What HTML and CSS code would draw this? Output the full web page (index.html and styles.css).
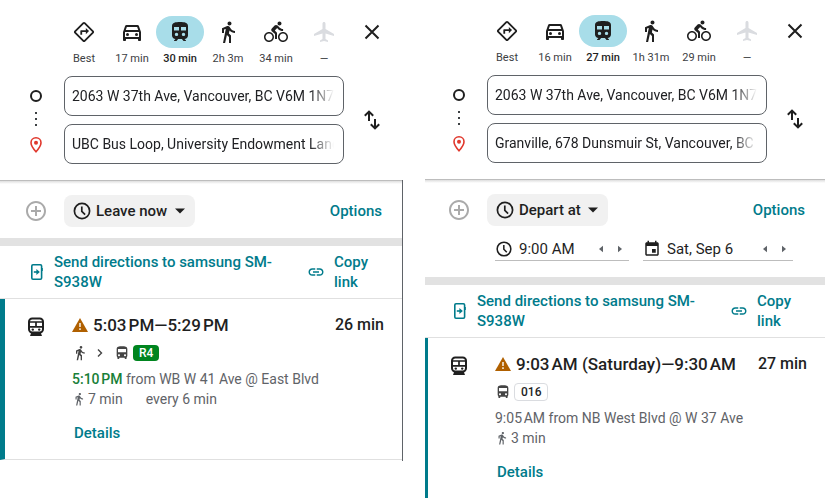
FILE: index.html
```html
<!DOCTYPE html>
<html lang="en">
<head>
<meta charset="utf-8">
<title>Transit directions</title>
<link rel="stylesheet" href="styles.css">
</head>
<body>
<svg class="sprite" aria-hidden="true">
  <symbol id="i-best" viewBox="0 0 24 24"><path d="M22.43 10.59l-9.01-9.01c-.75-.75-2.07-.76-2.83 0l-9 9c-.78.78-.78 2.04 0 2.82l9 9c.39.39.9.58 1.41.58.51 0 1.02-.19 1.41-.58l8.99-8.99c.79-.76.8-2.02.03-2.82zm-10.42 10.4l-9-9 9-9 9 9-9 9zM8 11v4h2v-3h4v2.5l3.5-3.5L14 7.5V10H9c-.55 0-1 .45-1 1z"/></symbol>
  <symbol id="i-car" viewBox="0 0 24 24"><path d="M18.92 6.01C18.72 5.42 18.16 5 17.5 5h-11c-.66 0-1.21.42-1.42 1.01L3 12v8c0 .55.45 1 1 1h1c.55 0 1-.45 1-1v-1h12v1c0 .55.45 1 1 1h1c.55 0 1-.45 1-1v-8l-2.08-5.99zM6.85 7h10.29l1.08 3.11H5.77L6.85 7zM19 17H5v-5h14v5z"/><circle cx="7.5" cy="14.5" r="1.5"/><circle cx="16.5" cy="14.5" r="1.5"/></symbol>
  <symbol id="i-train" viewBox="0 0 24 24"><path fill-rule="evenodd" d="M12 2c-4.400 0-8 .5-8 4v9.500C4 17.400 5.600 19 7.500 19L6 20.500v.5h2.500l1.600-2h3.800l1.600 2H18v-.5L16.500 19c1.900 0 3.500-1.600 3.500-3.500V6c0-3.500-3.600-4-8-4zM6 7h5v3.500H6zm7 0h5v3.500h-5zM8.500 12.700a1.700 1.700 0 1 1 0 3.400 1.700 1.700 0 0 1 0-3.400zm7 0a1.700 1.700 0 1 1 0 3.400 1.700 1.700 0 0 1 0-3.400z"/></symbol>
  <symbol id="i-walk" viewBox="0 0 24 24"><path d="M13.500 5.500c1.100 0 2-.9 2-2s-.9-2-2-2-2 .9-2 2 .9 2 2 2zM9.800 8.900L7 23h2.100l1.800-8 2.100 2v6h2v-7.500l-2.100-2 .6-3C14.800 12 16.800 13 19 13v-2c-1.900 0-3.500-1-4.300-2.400l-1-1.600c-.4-.6-1-1-1.700-1-.3 0-.5.1-.8.1L6 8.300V13h2V9.600l1.800-.7"/></symbol>
  <symbol id="i-bike" viewBox="0 0 24 24"><path d="M15.500 5.500c1.100 0 2-.9 2-2s-.9-2-2-2-2 .9-2 2 .9 2 2 2zM5 12c-2.800 0-5 2.200-5 5s2.200 5 5 5 5-2.200 5-5-2.200-5-5-5zm0 8.500c-1.900 0-3.500-1.600-3.500-3.500s1.600-3.500 3.500-3.500 3.500 1.600 3.500 3.500-1.600 3.500-3.500 3.500zm5.800-10l2.400-2.400.8.8c1.300 1.300 3 2.100 5.100 2.100V9c-1.500 0-2.700-.6-3.600-1.500l-1.900-1.900c-.5-.4-1-.6-1.600-.6s-1.100.2-1.400.6L7.800 8.400c-.4.4-.6.9-.6 1.400 0 .6.2 1.100.6 1.400L11 14v5h2v-6.200l-2.200-2.300zM19 12c-2.800 0-5 2.200-5 5s2.200 5 5 5 5-2.200 5-5-2.200-5-5-5zm0 8.500c-1.900 0-3.500-1.600-3.500-3.500s1.600-3.500 3.500-3.500 3.500 1.600 3.500 3.500-1.600 3.500-3.500 3.500z"/></symbol>
  <symbol id="i-plane" viewBox="0 0 24 24"><path d="M22 16v-2l-8.500-5V3.500c0-.83-.67-1.500-1.500-1.500s-1.500.67-1.500 1.500V9L2 14v2l8.500-2.500V19L8 20.500V22l4-1 4 1v-1.500L13.500 19v-5.500L22 16z"/></symbol>
  <symbol id="i-close" viewBox="0 0 24 24"><path d="M5.500 5.500l13 13m0-13l-13 13" fill="none" stroke="currentColor" stroke-width="2"/></symbol>
  <symbol id="i-swap" viewBox="0 0 24 24"><path d="M9 13V4M4.800 7.800L9 3.600l4.200 4.200M15 11v9M10.800 16.200l4.200 4.200 4.200-4.200" fill="none" stroke="currentColor" stroke-width="2"/></symbol>
  <symbol id="i-pin" viewBox="0 0 16 18"><path d="M8 1.800c-3 0-5 2.200-5 4.900C3 10 8 15.800 8 15.800S13 10 13 6.700c0-2.700-2-4.900-5-4.900z" fill="none" stroke="currentColor" stroke-width="1.600"/><circle cx="8" cy="6.800" r="2"/></symbol>
  <symbol id="i-add" viewBox="0 0 24 24"><path d="M13 7h-2v4H7v2h4v4h2v-4h4v-2h-4V7zm-1-5C6.490 2 2 6.490 2 12s4.490 10 10 10 10-4.490 10-10S17.510 2 12 2zm0 18c-4.410 0-8-3.590-8-8s3.590-8 8-8 8 3.590 8 8-3.590 8-8 8z"/></symbol>
  <symbol id="i-clock" viewBox="0 0 20 20"><circle cx="10" cy="10" r="7.600" fill="none" stroke="currentColor" stroke-width="1.700"/><path d="M9.800 5.500v4.800l3.300 3.400" fill="none" stroke="currentColor" stroke-width="1.700"/></symbol>
  <symbol id="i-event" viewBox="0 0 24 24"><path d="M17 12h-5v5h5v-5zM16 1v2H8V1H6v2H5c-1.110 0-1.990.9-1.990 2L3 19c0 1.100.89 2 2 2h14c1.100 0 2-.9 2-2V5c0-1.100-.9-2-2-2h-1V1h-2zm3 18H5V8h14v11z"/></symbol>
  <symbol id="i-down" viewBox="0 0 10 6"><path d="M0 .5h10L5 5.500z"/></symbol>
  <symbol id="i-prev" viewBox="0 0 4 8"><path d="M4 .8v6.400L0 4z"/></symbol>
  <symbol id="i-next" viewBox="0 0 4 8"><path d="M0 .8v6.400L4 4z"/></symbol>
  <symbol id="i-send" viewBox="0 0 12 16"><rect x=".8" y=".8" width="9.800" height="14.400" rx="1.200" fill="none" stroke="currentColor" stroke-width="1.600"/><path d="M10.600 4h1.200v3h-1.200z"/><path d="M2.800 8h3.500" fill="none" stroke="currentColor" stroke-width="1.600"/><path d="M5.400 5L8.800 8l-3.400 3z"/></symbol>
  <symbol id="i-link" viewBox="0 0 24 24"><path d="M3.900 12c0-1.710 1.390-3.100 3.100-3.100h4V7H7c-2.760 0-5 2.240-5 5s2.240 5 5 5h4v-1.900H7c-1.710 0-3.100-1.390-3.100-3.100zM8 13h8v-2H8v2zm9-6h-4v1.900h4c1.710 0 3.100 1.390 3.100 3.100s-1.390 3.100-3.100 3.100h-4V17h4c2.760 0 5-2.240 5-5s-2.240-5-5-5z"/></symbol>
  <symbol id="i-transit" viewBox="0 0 16 20"><rect x="1" y="1.500" width="14" height="14" rx="3.200" fill="none" stroke="currentColor" stroke-width="2"/><path d="M1 5h14M1 9.800h14M8 5v4.800" fill="none" stroke="currentColor" stroke-width="1.700"/><circle cx="4.800" cy="12.600" r="1.200"/><circle cx="11.200" cy="12.600" r="1.200"/><path d="M3.500 15h9l1.500 4H2z"/></symbol>
  <symbol id="i-warn" viewBox="0 0 16 14"><path d="M8 0l8 14H0z"/><path d="M8 5v4M8 10.300v1.700" stroke="#fff" stroke-width="1.400"/></symbol>
  <symbol id="i-bus" viewBox="0 0 24 24"><path d="M4 16c0 .88.39 1.670 1 2.220V20c0 .55.45 1 1 1h1c.55 0 1-.45 1-1v-1h8v1c0 .55.45 1 1 1h1c.55 0 1-.45 1-1v-1.780c.61-.55 1-1.340 1-2.220V6c0-3.500-3.580-4-8-4s-8 .5-8 4v10zm3.500 1c-.83 0-1.500-.67-1.500-1.500S6.670 14 7.500 14s1.500.67 1.500 1.500S8.330 17 7.500 17zm9 0c-.83 0-1.500-.67-1.500-1.500s.67-1.500 1.500-1.500 1.500.67 1.500 1.500-.67 1.500-1.500 1.500zm1.500-6H6V6h12v5z"/></symbol>
  <symbol id="i-chev" viewBox="0 0 8 10"><path d="M2 1.500L5.500 5 2 8.500" fill="none" stroke="currentColor" stroke-width="1.400"/></symbol>
</svg>

<main class="screens">
  <section class="panel panel-now">
    <header class="search">
      <div class="modes">
        <button class="mode"><span class="pill"><svg class="ic22"><use href="#i-best"/></svg></span>Best</button>
        <button class="mode"><span class="pill"><svg class="ic24"><use href="#i-car"/></svg></span>17 min</button>
        <button class="mode active"><span class="pill"><svg class="ic24"><use href="#i-train"/></svg></span>30 min</button>
        <button class="mode"><span class="pill"><svg class="ic24"><use href="#i-walk"/></svg></span>2h 3m</button>
        <button class="mode"><span class="pill"><svg class="ic24"><use href="#i-bike"/></svg></span>34 min</button>
        <button class="mode off"><span class="pill"><svg class="ic24"><use href="#i-plane"/></svg></span>—</button>
        <button class="close" aria-label="Close directions"><svg class="ic24"><use href="#i-close"/></svg></button>
      </div>
      <div class="route">
        <div class="rail"><span class="origin"></span><span class="dots"><i></i><i></i><i></i></span><svg class="pin"><use href="#i-pin"/></svg></div>
        <div class="fields">
          <div class="field"><input type="text" aria-label="Starting point" value="2063 W 37th Ave, Vancouver, BC V6M 1N7"></div>
          <div class="field"><input type="text" aria-label="Destination" value="UBC Bus Loop, University Endowment Lands"></div>
        </div>
        <button class="swap" aria-label="Reverse route"><svg class="ic24"><use href="#i-swap"/></svg></button>
      </div>
    </header>
    <div class="body">
      <div class="controls">
        <button class="add" aria-label="Add destination"><svg class="ic24"><use href="#i-add"/></svg></button>
        <label class="when"><svg class="ic20"><use href="#i-clock"/></svg><select aria-label="Departure time"><option>Leave now</option></select><svg class="caret"><use href="#i-down"/></svg></label>
        <button class="options">Options</button>
      </div>
      <div class="share">
        <button class="send"><svg class="phone"><use href="#i-send"/></svg><span>Send directions to samsung SM-S938W</span></button>
        <button class="copy"><svg class="ic18"><use href="#i-link"/></svg><span>Copy link</span></button>
      </div>
      <article class="trip">
        <svg class="transit"><use href="#i-transit"/></svg>
        <div class="info">
          <div class="head"><h2><svg class="warn"><use href="#i-warn"/></svg>5:03&#8239;PM—5:29&#8239;PM</h2><span class="time">26 min</span></div>
          <div class="legs"><svg class="ic16"><use href="#i-walk"/></svg><svg class="chev"><use href="#i-chev"/></svg><svg class="ic16"><use href="#i-bus"/></svg><span class="line green">R4</span></div>
          <p><b>5:10&#8239;PM</b> from WB W 41 Ave @ East Blvd</p>
          <p class="meta"><svg class="ic14"><use href="#i-walk"/></svg><span>7 min</span><span class="freq">every 6 min</span></p>
          <button class="details">Details</button>
        </div>
      </article>
    </div>
  </section>

  <section class="panel panel-later">
    <header class="search">
      <div class="modes">
        <button class="mode"><span class="pill"><svg class="ic22"><use href="#i-best"/></svg></span>Best</button>
        <button class="mode"><span class="pill"><svg class="ic24"><use href="#i-car"/></svg></span>16 min</button>
        <button class="mode active"><span class="pill"><svg class="ic24"><use href="#i-train"/></svg></span>27 min</button>
        <button class="mode"><span class="pill"><svg class="ic24"><use href="#i-walk"/></svg></span>1h 31m</button>
        <button class="mode"><span class="pill"><svg class="ic24"><use href="#i-bike"/></svg></span>29 min</button>
        <button class="mode off"><span class="pill"><svg class="ic24"><use href="#i-plane"/></svg></span>—</button>
        <button class="close" aria-label="Close directions"><svg class="ic24"><use href="#i-close"/></svg></button>
      </div>
      <div class="route">
        <div class="rail"><span class="origin"></span><span class="dots"><i></i><i></i><i></i></span><svg class="pin"><use href="#i-pin"/></svg></div>
        <div class="fields">
          <div class="field"><input type="text" aria-label="Starting point" value="2063 W 37th Ave, Vancouver, BC V6M 1N7"></div>
          <div class="field"><input type="text" aria-label="Destination" value="Granville, 678 Dunsmuir St, Vancouver, BC"></div>
        </div>
        <button class="swap" aria-label="Reverse route"><svg class="ic24"><use href="#i-swap"/></svg></button>
      </div>
    </header>
    <div class="body">
      <div class="controls">
        <button class="add" aria-label="Add destination"><svg class="ic24"><use href="#i-add"/></svg></button>
        <label class="when"><svg class="ic20"><use href="#i-clock"/></svg><select aria-label="Departure time"><option>Depart at</option></select><svg class="caret"><use href="#i-down"/></svg></label>
        <button class="options">Options</button>
      </div>
      <div class="schedule">
        <div class="picker clock"><svg class="ic18"><use href="#i-clock"/></svg><input type="text" aria-label="Time" value="9:00 AM"><button aria-label="Earlier"><svg class="tri"><use href="#i-prev"/></svg></button><button aria-label="Later"><svg class="tri"><use href="#i-next"/></svg></button></div>
        <div class="picker day"><svg class="ic18"><use href="#i-event"/></svg><input type="text" aria-label="Date" value="Sat, Sep 6"><button aria-label="Previous day"><svg class="tri"><use href="#i-prev"/></svg></button><button aria-label="Next day"><svg class="tri"><use href="#i-next"/></svg></button></div>
      </div>
      <div class="share">
        <button class="send"><svg class="phone"><use href="#i-send"/></svg><span>Send directions to samsung SM-S938W</span></button>
        <button class="copy"><svg class="ic18"><use href="#i-link"/></svg><span>Copy link</span></button>
      </div>
      <article class="trip">
        <svg class="transit"><use href="#i-transit"/></svg>
        <div class="info">
          <div class="head"><h2><svg class="warn"><use href="#i-warn"/></svg>9:03&#8239;AM (Saturday)—9:30&#8239;AM</h2><span class="time">27 min</span></div>
          <div class="legs"><svg class="ic16"><use href="#i-bus"/></svg><span class="line plain">016</span></div>
          <p>9:05&#8239;AM from NB West Blvd @ W 37 Ave</p>
          <p class="meta"><svg class="ic14"><use href="#i-walk"/></svg><span>3 min</span></p>
          <button class="details">Details</button>
        </div>
      </article>
    </div>
  </section>
</main>
</body>
</html>
```
FILE: styles.css
```css
* { box-sizing: border-box; }

body {
  margin: 0;
  background: #fff;
  color: #1f1f1f;
  font: 14px/20px Roboto, "Liberation Sans", sans-serif;
  overflow: hidden;
}

button, input, select {
  margin: 0;
  padding: 0;
  border: 0;
  background: none;
  color: inherit;
  font: inherit;
}

button { cursor: pointer; }
input { min-width: 0; }
svg { display: block; flex: none; fill: currentColor; }
.sprite { position: absolute; width: 0; height: 0; }

.ic14 { width: 14px; height: 14px; }
.ic16 { width: 16px; height: 16px; }
.ic18 { width: 18px; height: 18px; }
.ic20 { width: 20px; height: 20px; }
.ic22 { width: 22px; height: 22px; }
.ic24 { width: 24px; height: 24px; }

.screens {
  display: grid;
  grid-template-columns: 403fr 400fr;
  column-gap: 22px;
  min-height: 100vh;
}

.panel { display: flex; flex-direction: column; min-width: 0; }
.panel-now { --lead: 8px; --trail: 3px; --top: 16px; --bar: 5px; }
.panel-later { --lead: 6px; --trail: 2px; --top: 15px; --bar: 3px; }

/* Travel modes and addresses */
.search { padding: var(--top) var(--trail) 16px var(--lead); }

.modes { display: flex; align-items: flex-start; padding-left: 52px; }

.mode {
  display: flex;
  flex-direction: column;
  align-items: center;
  gap: 2px;
  width: 48px;
  font-size: 11px;
  line-height: 17px;
  color: #3c4043;
  white-space: nowrap;
}

.pill {
  display: grid;
  place-items: center;
  width: 48px;
  height: 32px;
  border-radius: 16px;
  color: #1f1f1f;
}

.active { color: #1f1f1f; font-weight: 500; }
.active .pill { background: #a8dde9; }
.off .pill { color: #dadce0; }

.close {
  display: grid;
  place-items: center;
  width: 48px;
  height: 32px;
  margin: 0 4px 0 auto;
}

.route { display: flex; align-items: center; margin-top: 9px; }

.rail {
  display: flex;
  flex-direction: column;
  align-items: center;
  justify-content: space-between;
  width: 56px;
  height: 68px;
  padding-top: 4px;
}

.origin { width: 12px; height: 12px; border: 2px solid #1f1f1f; border-radius: 50%; }
.dots { display: grid; gap: 4px; }
.dots i { width: 2px; height: 2px; background: #3c4043; }
.pin { width: 16px; height: 18px; color: #e0382d; }

.fields { display: grid; gap: 8px; flex: 1; min-width: 0; }

.field {
  height: 40px;
  padding: 0 9px 0 7px;
  border: 1px solid #5f6368;
  border-radius: 8px;
}

.field input {
  width: 100%;
  height: 100%;
  color: #202124;
  mask-image: linear-gradient(to left, transparent, #000 24px);
}

.swap { display: grid; place-items: center; width: 56px; height: 48px; }

/* Departure controls */
.body {
  background: linear-gradient(#bdbdbd 1px, #dedede 1px, #fff 4px) no-repeat top / 100% 4px;
}

.panel-now .body { border-right: 1px solid #5f6368; padding-bottom: 1px; }
.panel-later .body { flex: 1; display: flex; flex-direction: column; }

.controls { display: flex; align-items: center; padding: 15px 20px 11px var(--lead); }
.add { display: grid; place-items: center; width: 56px; height: 32px; color: #aaa; }

.when {
  display: flex;
  align-items: center;
  gap: 4px;
  height: 32px;
  padding: 0 10px 0 8px;
  border-radius: 8px;
  background: #f1f1f1;
  font-size: 15px;
  font-weight: 500;
}

.when select { appearance: none; }
.caret { width: 10px; height: 6px; margin-left: 3px; }
.options { margin-left: auto; font-size: 15px; font-weight: 500; color: #007b8b; }

.schedule {
  display: flex;
  gap: 14px;
  padding: 0 32px 16px 70px;
}

.picker {
  display: flex;
  align-items: center;
  height: 24px;
  border-bottom: 1px solid #bdbdbd;
}

.clock { flex: 134; }
.day { flex: 150; }
.picker input { flex: 1; width: 0; margin-left: 6px; font-size: 15px; }
.picker button { display: grid; place-items: center; width: 21px; height: 20px; color: #5f6368; }
.picker button:last-child { width: 18px; }
.tri { width: 4px; height: 8px; }

.share {
  display: flex;
  justify-content: space-between;
  padding: 6px 21px 6px calc(var(--lead) + 23px);
  border-top: 8px solid #e2e2e2;
  border-bottom: 1px solid #e0e0e0;
  color: #007b8b;
  font-size: 15px;
  font-weight: 500;
}

.share button { display: flex; align-items: center; text-align: left; }
.send { gap: 11px; max-width: 252px; }
.phone { width: 12px; height: 16px; }
.copy { gap: 9px; width: 74px; }

/* Suggested trip */
.trip {
  display: flex;
  padding: 14px 18px 16px calc(var(--lead) + 20px - var(--bar));
  border-left: var(--bar) solid #007b8b;
}

.panel-now .trip { border-bottom: 1px solid #e0e0e0; }
.panel-later .trip { flex: 1; }
.transit { width: 16px; height: 20px; margin-top: 4px; }
.info { flex: 1; min-width: 0; padding-left: 28px; }
.head { display: flex; justify-content: space-between; font-size: 17px; line-height: 24px; font-weight: 500; }
h2 { display: flex; align-items: center; gap: 5px; margin: 0; font: inherit; }
.warn { width: 16px; height: 14px; color: #b06000; }
.time { font-size: 16px; }

.legs { display: flex; align-items: center; height: 32px; color: #444; }
.chev { width: 8px; height: 10px; margin: 0 10px 0 8px; }

.line {
  margin-left: 3px;
  padding: 0 6px;
  border-radius: 4px;
  font-size: 12px;
  line-height: 16px;
  font-weight: 500;
}

.green { background: #00851f; color: #fff; }
.plain { border: 1px solid #dadce0; color: #1f1f1f; }

p { margin: 0; color: #5f6368; }
p b { font-weight: 500; color: #188038; }
.meta { display: flex; align-items: center; gap: 2px; }
.freq { margin-left: 21px; }
.details { display: block; margin: 14px 0 0 2px; font-size: 15px; line-height: 20px; font-weight: 500; color: #007b8b; }
```
